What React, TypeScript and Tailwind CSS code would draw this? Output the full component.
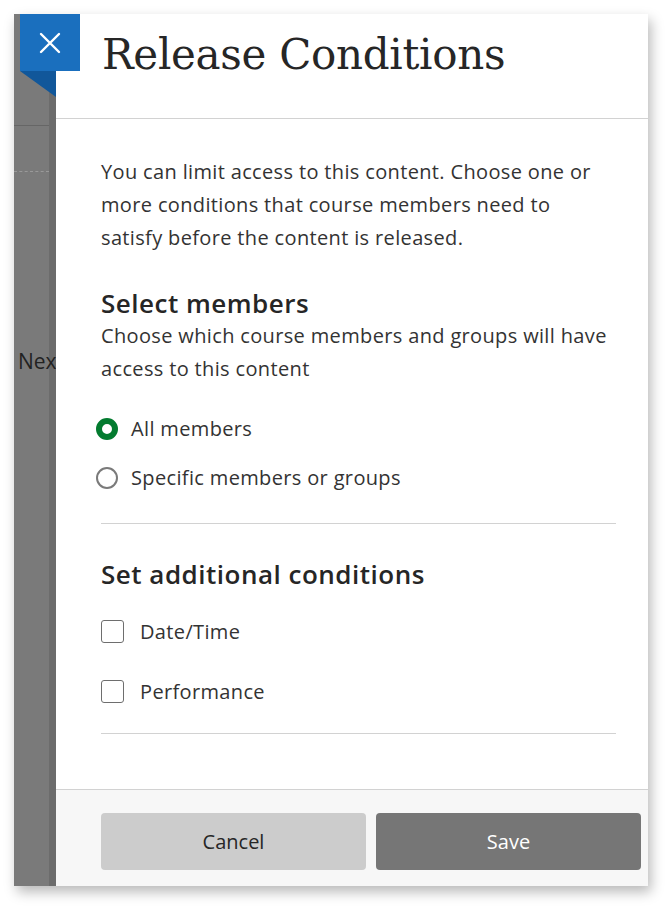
import React from "react";

const sans = "font-['Open_Sans',sans-serif]";

const Radio = ({ checked, label }: { checked?: boolean; label: string }) => (
  <label className="flex items-center h-[33px] -ml-[5px]">
    {checked ? (
      <span className="w-[22px] h-[22px] rounded-full border-[6px] border-[#037b2f] bg-white" />
    ) : (
      <span className="w-[22px] h-[22px] rounded-full border-2 border-[#7a7a7a] bg-white" />
    )}
    <span className="ml-[13px] text-[20px] tracking-[0.35px] text-[#333]">{label}</span>
  </label>
);

const Check = ({ label }: { label: string }) => (
  <label className="flex items-center h-[33px]">
    <span className="w-[23px] h-[23px] rounded-[3px] border border-[#6e6e6e] bg-white" />
    <span className="ml-[16px] text-[20px] tracking-[0.35px] text-[#333]">{label}</span>
  </label>
);

const App = () => {
  return (
    <div className={`w-[672px] h-[910px] bg-white p-[14px] ${sans}`}>
      <div className="relative flex w-[634px] h-[872px] shadow-[3px_6px_12px_rgba(0,0,0,0.28)]">
        {/* page behind the panel */}
        <div className="w-[42px] flex flex-col overflow-hidden bg-[linear-gradient(to_right,#7a7a7a_35px,#6c6c6c_35px)]">
          <div className="w-[35px] h-[112px] border-b border-[#666]" />
          <div className="w-[35px] h-[46px] border-b border-dashed border-[#999]" />
          <div className="mt-[174px] ml-[4px] text-[21px] text-[#222] whitespace-nowrap">Next</div>
        </div>

        {/* close button */}
        <button className="absolute left-[6px] top-0 w-[60px] h-[57px] flex items-center justify-center bg-[#1a6fbe]">
          <svg width="24" height="24" viewBox="0 0 24 24" fill="none" stroke="white" strokeWidth="2.4" strokeLinecap="round">
            <path d="M3 3 L21 21 M21 3 L3 21" />
          </svg>
        </button>
        <svg className="absolute left-[6px] top-[57px]" width="36" height="26" viewBox="0 0 36 26">
          <polygon points="0,0 36,0 36,26" fill="#11579a" />
        </svg>

        {/* panel */}
        <div className="flex-1 flex flex-col bg-white">
          <div className="h-[105px] border-b border-[#d2d2d2] pl-[46px] pt-[17px]">
            <h1 className="font-['DejaVu_Serif',serif] text-[42px] leading-[48px] text-[#262626] tracking-[-0.3px]">
              Release Conditions
            </h1>
          </div>

          <div className="flex-1 pl-[45px] pr-[32px] pt-[36px]">
            <p className="text-[20px] tracking-[0.35px] leading-[33px] text-[#333]">
              You can limit access to this content. Choose one or more conditions that course members need to satisfy
              before the content is released.
            </p>

            <h2 className="mt-[33px] text-[26px] tracking-[0.5px] leading-[32px] font-semibold text-[#262626]">
              Select members
            </h2>
            <p className="text-[20px] tracking-[0.35px] leading-[33px] text-[#333]">
              Choose which course members and groups will have access to this content
            </p>

            <div className="mt-[27px] flex flex-col gap-[16px]">
              <Radio checked label="All members" />
              <Radio label="Specific members or groups" />
            </div>

            <div className="mt-[29px] border-t border-[#d2d2d2]" />

            <h2 className="mt-[34px] text-[26px] tracking-[0.5px] leading-[32px] font-semibold text-[#262626]">
              Set additional conditions
            </h2>

            <div className="mt-[25px] flex flex-col gap-[27px]">
              <Check label="Date/Time" />
              <Check label="Performance" />
            </div>

            <div className="mt-[25px] border-t border-[#d2d2d2]" />
          </div>

          <div className="h-[97px] border-t border-[#d2d2d2] bg-[#f7f7f7] pl-[45px] pr-[7px] pt-[23px] flex gap-[10px]">
            <button className="flex-1 h-[57px] rounded-[4px] bg-[#cccccc] text-[20px] text-[#262626]">Cancel</button>
            <button className="flex-1 h-[57px] rounded-[4px] bg-[#767676] text-[20px] text-white">Save</button>
          </div>
        </div>
      </div>
    </div>
  );
};

export default App;
